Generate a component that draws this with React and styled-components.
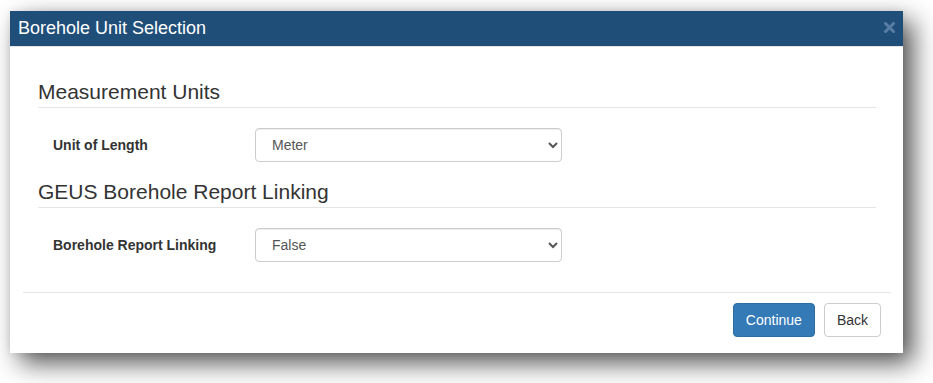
import styled, { createGlobalStyle } from "styled-components";

const GlobalStyle = createGlobalStyle`
  html, body {
    margin: 0;
    padding: 0;
    background: #fff;
  }
  body {
    font-family: "Liberation Sans", Arial, sans-serif;
    font-size: 14px;
    color: #333;
  }
`;

const sections = [
  {
    title: "Measurement Units",
    label: "Unit of Length",
    value: "Meter",
    options: ["Meter", "Feet"],
  },
  {
    title: "GEUS Borehole Report Linking",
    label: "Borehole Report Linking",
    value: "False",
    options: ["False", "True"],
  },
];

const App = () => {
  return (
    <Page>
      <GlobalStyle />
      <Dialog>
        <Header>
          <Title>Borehole Unit Selection</Title>
          <Close type="button" aria-label="Close">
            <svg width="11" height="11" viewBox="0 0 11 11">
              <path
                d="M1.5 1.5 L9.5 9.5 M9.5 1.5 L1.5 9.5"
                stroke="currentColor"
                strokeWidth="3"
                strokeLinecap="round"
              />
            </svg>
          </Close>
        </Header>
        <Body>
          {sections.map((s, i) => (
            <Section key={s.title} $first={i === 0}>
              <Legend>{s.title}</Legend>
              <Row>
                <Label>{s.label}</Label>
                <Select defaultValue={s.value}>
                  {s.options.map((o) => (
                    <option key={o}>{o}</option>
                  ))}
                </Select>
              </Row>
            </Section>
          ))}
        </Body>
        <Footer>
          <Button $primary type="button">
            Continue
          </Button>
          <Button type="button">Back</Button>
        </Footer>
      </Dialog>
    </Page>
  );
};

export default App;

const Page = styled.div`
  min-height: 383px;
  padding: 11px 0 0 10px;
  box-sizing: border-box;
`;

const Dialog = styled.div`
  width: 893px;
  height: 342px;
  background: #fff;
  box-shadow: 10px 10px 24px rgba(0, 0, 0, 0.68), 0 0 8px rgba(0, 0, 0, 0.08);
  display: flex;
  flex-direction: column;
  box-sizing: border-box;
`;

const Header = styled.div`
  height: 35px;
  background: #1f4e79;
  border-bottom: 1px solid #e5e5e5;
  display: flex;
  align-items: center;
  justify-content: space-between;
  padding: 0 8px 0 8px;
`;

const Title = styled.h4`
  margin: 0;
  font-size: 18px;
  font-weight: normal;
  color: #fff;
  line-height: 20px;
  padding-bottom: 1px;
`;

const Close = styled.button`
  border: 0;
  background: none;
  padding: 0;
  display: flex;
  color: #5a7ea3;
  cursor: pointer;
  margin-bottom: 2px;
`;

const Body = styled.div`
  padding: 0 27px 0 28px;
  flex: 1;
`;

const Section = styled.div`
  margin-top: ${(p) => (p.$first ? "33px" : "18px")};
`;

const Legend = styled.h3`
  margin: 0;
  font-size: 21px;
  font-weight: normal;
  line-height: 23px;
  color: #333;
  padding-bottom: 4px;
  border-bottom: 1px solid #e5e5e5;
`;

const Row = styled.div`
  display: flex;
  align-items: center;
  margin-top: 20px;
  padding-left: 15px;
`;

const Label = styled.label`
  width: 202px;
  font-weight: bold;
  font-size: 14px;
  color: #333;
`;

const Select = styled.select`
  width: 307px;
  height: 34px;
  padding: 6px 8px 6px 12px;
  font-family: "Liberation Sans", Arial, sans-serif;
  font-size: 14px;
  color: #555;
  background: #fff;
  border: 1px solid #ccc;
  border-radius: 4px;
  box-shadow: inset 0 1px 1px rgba(0, 0, 0, 0.075);
`;

const Footer = styled.div`
  margin: 0 12px 0 13px;
  border-top: 1px solid #e5e5e5;
  padding: 10px 10px 16px;
  display: flex;
  justify-content: flex-end;
  gap: 9px;
`;

const Button = styled.button`
  height: 34px;
  padding: 6px 12px;
  font-family: "Liberation Sans", Arial, sans-serif;
  font-size: 14px;
  line-height: 20px;
  border-radius: 4px;
  border: 1px solid ${(p) => (p.$primary ? "#2e6da4" : "#ccc")};
  background: ${(p) => (p.$primary ? "#337ab7" : "#fff")};
  color: ${(p) => (p.$primary ? "#fff" : "#333")};
  cursor: pointer;
`;
